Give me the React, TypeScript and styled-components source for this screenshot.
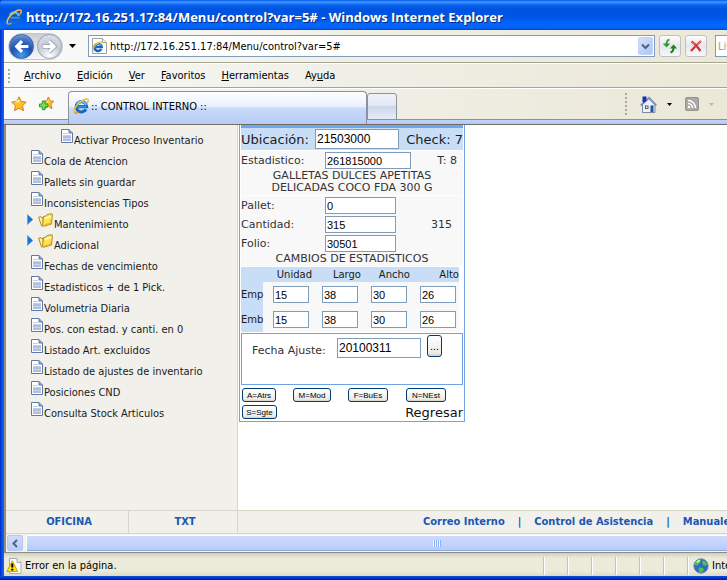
import React from 'react';
import styled, { createGlobalStyle } from 'styled-components';

const tahoma = '"DejaVu Sans Condensed", "DejaVu Sans", sans-serif';
const verdana = '"DejaVu Sans", sans-serif';
const arial = '"Liberation Sans", sans-serif';

const GlobalStyle = createGlobalStyle`
  * { box-sizing: border-box; }
  body { margin: 0; background: #fff; overflow: hidden; }
  button, input { font: inherit; margin: 0; }
  a { text-decoration: none; color: inherit; }
`;

const Window = styled.div`
  height: 100vh;
  display: flex;
  flex-direction: column;
  overflow: hidden;
  padding: 0 0 4px 4px;
  font-family: ${tahoma};
  font-size: 11px;
  color: #000;
  background: linear-gradient(transparent calc(100% - 4px), #0a4fe0 calc(100% - 4px), #0018a0 100%),
    linear-gradient(90deg, #0028c8 0, #0b50e4 2px, #0f66f4 4px, #eceadb 4px);
`;

const TitleBar = styled.header`
  flex: none;
  height: 30px;
  margin-left: -4px;
  padding: 3px 0 0 6px;
  display: flex;
  align-items: center;
  gap: 4px;
  border-top-left-radius: 4px;
  background: linear-gradient(#0058ee 0, #3f96ff 2px, #0a62f0 5px, #0053e0 9px, #0055e5 17px, #0266ff 24px, #0262f8 28px, #0144c8 30px);
`;

const Title = styled.h1`
  margin: 0;
  font: bold 13px/18px "Open Sans", sans-serif;
  color: #fff;
  white-space: nowrap;
  text-shadow: 1px 1px 0 #0a2a80;
`;

const NavBar = styled.div`
  flex: none;
  height: 33px;
  padding: 2px 0 2px 4px;
  display: flex;
  align-items: center;
  background: linear-gradient(90deg, #fafafa, #f0efe6 50%, #ebe8d7);
  border-bottom: 1px solid #a5a592;
`;

const NavPill = styled.div`
  display: flex;
  align-items: center;
  justify-content: space-between;
  height: 27px;
  width: 55px;
  border-radius: 14px;
  background: linear-gradient(#c9ccd1, #f7f8fa);
  border: 1px solid #c5c8cd;
`;

const RoundButton = styled.button<{ $active?: boolean }>`
  width: 25px;
  height: 25px;
  padding: 0;
  display: grid;
  place-items: center;
  border-radius: 50%;
  border: 1px solid ${(p) => (p.$active ? '#3c5e9e' : '#98a3b5')};
  background: ${(p) =>
    p.$active
      ? 'radial-gradient(circle at 50% 90%, #3fa0ee 0, #1f50b4 45%, #4b7dcb 75%, #a5c0ea 100%)'
      : 'radial-gradient(circle at 50% 90%, #ffffff 0, #c3cad6 50%, #e4e8ee 100%)'};
`;

const PlainButton = styled.button`
  padding: 0;
  border: 0;
  background: none;
  display: grid;
  place-items: center;
`;

const HistoryButton = styled(PlainButton)`
  width: 25px;
  height: 24px;
  padding-right: 7px;
`;

const AddressBox = styled.div`
  flex: 1;
  min-width: 0;
  height: 22px;
  padding: 1px 1px 1px 2px;
  display: flex;
  align-items: center;
  gap: 3px;
  background: #fff;
  border: 1px solid #7f9db9;
`;

const AddressInput = styled.input`
  flex: 1;
  min-width: 0;
  border: 0;
  padding: 1px 0 0;
  background: transparent;
  outline: 0;
`;

const DropButton = styled(PlainButton)`
  width: 15px;
  height: 18px;
  border-radius: 2px;
  background: linear-gradient(135deg, #d5e0fb, #afc5f4);
  border: 1px solid #c3d3f8;
`;

const SquareButton = styled(PlainButton)`
  flex: none;
  width: 22px;
  height: 22px;
  margin-left: 4px;
  border: 1px solid #bfc0c4;
  border-radius: 3px;
  background: linear-gradient(#fdfdfd, #e6e7ee 50%, #f8f8fa);
`;

const SearchInput = styled.input`
  flex: 0 0 160px;
  height: 22px;
  margin: 0 -148px 0 8px;
  padding: 0 2px;
  border: 1px solid #7f9db9;
  background: #fff;
  &::placeholder { color: #a2a090; opacity: 1; }
`;

const MenuBar = styled.nav`
  flex: none;
  height: 25px;
  padding: 1px 0 0 4px;
  display: flex;
  align-items: center;
  background: linear-gradient(90deg, #f9f9f8, #f0efe6 50%, #ebe8d7);
  border-top: 1px solid #fff;
  border-bottom: 1px solid #a5a592;
`;

const Grip = styled.span<{ $h: number }>`
  flex: none;
  width: 2px;
  height: ${(p) => p.$h}px;
  background: repeating-linear-gradient(#aaa9a0 0, #aaa9a0 2px, transparent 2px, transparent 4px);
`;

const MenuItems = styled.div`
  display: flex;
  gap: 16px;
  margin-left: 14px;
  button { padding: 0; border: 0; background: none; line-height: 18px; }
`;

const TabBar = styled.div`
  flex: none;
  height: 37px;
  display: flex;
  align-items: flex-start;
  background: linear-gradient(#fff 0, #fff 1px, transparent 1px),
    linear-gradient(transparent 31px, #8c919c 31px, #8c919c 32px, #c3d2f6 32px, #b4c8f6 36px, #716f64 36px),
    linear-gradient(90deg, #fafafa, #f0efe6 50%, #ebe8d7);
`;

const Favorites = styled.div`
  display: flex;
  width: 64px;
  padding: 8px 0 0 7px;
  gap: 11px;
`;

const Tab = styled.button`
  flex: 0 1 299px;
  height: 33px;
  margin-top: 3px;
  padding: 0 0 4px 4px;
  display: flex;
  align-items: center;
  gap: 2px;
  border: 1px solid #8c919c;
  border-bottom: 0;
  border-radius: 4px 4px 0 0;
  background: linear-gradient(#fdfeff 0, #eaf1fd 45%, #c9dbf9 50%, #b8cbf6 100%);
`;

const NewTab = styled.button`
  width: 30px;
  height: 27px;
  margin-top: 5px;
  padding: 0;
  border: 1px solid #8c919c;
  border-radius: 3px 3px 0 0;
  background: linear-gradient(#eef1fa 0, #e4e9f6 45%, #ccd5ea 50%, #e7ecf7);
`;

const Commands = styled.div`
  flex: none;
  margin-left: auto;
  height: 32px;
  display: flex;
  align-items: center;
  padding-right: 13px;
`;

const HomeGroup = styled.div`
  display: flex;
  align-items: center;
  gap: 10px;
  margin-left: 13px;
`;

const Viewport = styled.div`
  flex: 1;
  min-height: 0;
  display: flex;
  flex-direction: column;
  border-left: 2px solid #8f8d82;
  background: #fff;
`;

const Page = styled.div`
  flex: 1;
  min-height: 0;
  display: grid;
  grid-template-columns: 232px 1fr;
  overflow: hidden;
`;

const Sidebar = styled.ul`
  margin: 0;
  padding: 4px 0 0;
  list-style: none;
  background: #f1f0eb;
  border-right: 1px solid #d8d6c8;
`;

const TreeRow = styled.li<{ $indent: number }>`
  height: 21px;
  padding-left: ${(p) => p.$indent}px;
  display: flex;
  align-items: flex-start;
  white-space: nowrap;
  a { line-height: 23px; color: #1a1a1a; margin-left: 1px; }
  svg { flex: none; }
`;

const Arrow = styled.span`
  width: 11px;
  margin-top: 1px;
  display: flex;
`;

const Main = styled.main`
  padding-left: 1px;
  min-width: 0;
  background: #fff;
`;

const Panel = styled.form`
  width: 226px;
  padding: 0 1px 1px;
  border: 1px solid #6fa5e6;
  border-top: 0;
  background: #fff;
  font-family: ${verdana};
  color: #333;
`;

const PanelCap = styled.div`
  height: 3px;
  background: #6ea6ea;
`;

const LocationRow = styled.div`
  display: flex;
  align-items: center;
  height: 22px;
  margin-bottom: 1px;
  background: #c8ddf6;
  color: #1c1c1c;
  font-size: 13px;
`;

const Field = styled.input<{ $w: number; $large?: boolean }>`
  width: ${(p) => p.$w}px;
  height: ${(p) => (p.$large ? 20 : 17)}px;
  padding: 0 1px;
  border: 1px solid #7f9db9;
  border-radius: 0;
  background: #fff;
  color: #000;
  font: ${(p) => (p.$large ? '12px "Liberation Sans"' : '11px "Liberation Sans"')}, sans-serif;
`;

const Trailing = styled.span<{ $right: number }>`
  margin-left: auto;
  padding-right: ${(p) => p.$right}px;
`;

const LineRow = styled.div`
  display: flex;
  align-items: center;
  height: 19px;
  background: #f8f8f8;
  label { width: 84px; }
`;

const LocationLabel = styled.label`
  width: 74px;
  white-space: nowrap;
`;

const Caption = styled.div<{ $gap?: boolean }>`
  margin-bottom: ${(p) => (p.$gap ? 1 : 0)}px;
  padding-bottom: 1px;
  background: #f8f8f8;
  font-size: 11px;
  line-height: 12px;
  text-align: center;
`;

const Sizes = styled.table`
  width: 218px;
  border-collapse: collapse;
  table-layout: fixed;
  font-size: 10px;
  line-height: 12px;
  color: #1c1c1c;
  th { padding: 0; font-weight: normal; background: #c8ddf6; }
  thead th { height: 15px; text-align: right; }
  tbody th { text-align: left; }
  td { height: 25px; padding: 0 0 0 10px; background: #f8f8f8; vertical-align: middle; }
  input { display: block; }
`;

const DateBox = styled.div`
  height: 52px;
  margin-top: 1px;
  padding: 1px 0 0 10px;
  display: flex;
  align-items: flex-start;
  border: 1px solid #6fa5e6;
  label { width: 85px; line-height: 31px; }
  input { margin-top: 3px; }
`;

const DotsButton = styled.button`
  width: 15px;
  height: 22px;
  margin-left: 6px;
  padding: 0;
  border: 1px solid #003c74;
  border-radius: 3px;
  background: linear-gradient(#fff, #ecebe5 85%, #d6d0c5);
  font: 11px/16px ${arial};
`;

const Actions = styled.div`
  display: grid;
  grid-template-columns: 51px 55px 58px 1fr;
  row-gap: 3px;
  padding: 3px 0 0 1px;
`;

const ActionButton = styled.button<{ $w: number }>`
  width: ${(p) => p.$w}px;
  height: 14px;
  padding: 0;
  border: 1px solid #003c74;
  border-radius: 3px;
  background: linear-gradient(#fff, #ecebe5 85%, #d6d0c5);
  font: 8px/11px ${arial};
  color: #000;
`;

const BackLink = styled.a`
  grid-column: 2 / -1;
  justify-self: end;
  font-size: 13px;
  line-height: 15px;
  color: #111;
`;

const Footer = styled.div`
  flex: none;
  display: grid;
  grid-template-columns: 123px 109px 1fr;
  height: 24px;
  background: #f1f0eb;
  border-top: 1px solid #d8d6c8;
  border-bottom: 1px solid #d8d6c8;
  font-weight: bold;
  color: #1b57b3;
  white-space: nowrap;
`;

const FooterCell = styled.a`
  padding-left: 4px;
  border-right: 1px solid #d8d6c8;
  text-align: center;
  line-height: 22px;
`;

const FooterLinks = styled.nav`
  display: flex;
  gap: 13px;
  padding-left: 185px;
  line-height: 21px;
  min-width: 0;
`;

const ScrollBar = styled.div`
  flex: none;
  height: 18px;
  padding: 1px 0 1px 1px;
  display: flex;
  gap: 3px;
  overflow: hidden;
  background: #f3f2ec;
`;

const ScrollButton = styled(PlainButton)`
  flex: none;
  width: 16px;
  height: 16px;
  border: 1px solid #b5c7f3;
  border-radius: 2px;
  background: linear-gradient(#d0dcfc, #b8ccf8);
`;

const Thumb = styled.div`
  flex: 0 0 822px;
  height: 16px;
  display: grid;
  place-items: center;
  border: 1px solid #fff;
  border-bottom-color: #8aa9dd;
  border-radius: 2px;
  background: linear-gradient(#ccdafd, #c3d3fd 60%, #b5ccfa);
`;

const ThumbGrip = styled.span`
  width: 8px;
  height: 7px;
  background: repeating-linear-gradient(90deg, #eef4fe 0, #eef4fe 1px, #8cb0f8 1px, #8cb0f8 2px);
`;

const StatusBar = styled.footer`
  flex: none;
  height: 24px;
  display: flex;
  align-items: center;
  gap: 3px;
  padding: 2px 0 0 2px;
  border-top: 1px solid #8f8d82;
  background: linear-gradient(#d0cebf, #eceadb 5px, #eceadb 18px, #dcd9c6);
`;

const StatusCells = styled.div`
  flex: none;
  margin-left: auto;
  display: flex;
  height: 18px;
`;

const StatusCell = styled.span`
  width: 24px;
  border-left: 1px solid #c5c2b0;
  box-shadow: inset 1px 0 0 #fff;
`;

const Zone = styled(StatusCell)`
  width: 40px;
  padding-left: 5px;
  display: flex;
  align-items: center;
  gap: 3px;
  white-space: nowrap;
  svg { flex: none; }
`;

const IeLogo = ({ size }: { size: number }) => (
  <svg width={size} height={size} viewBox="0 0 16 16" aria-hidden="true">
    <path d="M13 11.2A5.200 5.200 0 1 1 13.600 8.600H5" fill="none" stroke="#1767c4" strokeWidth="3.200" />
    <path d="M13 7A4.900 4.900 0 0 0 4 6" fill="none" stroke="#5fbdf5" strokeWidth="2" />
    <path d="M5 8.800h8" stroke="#3f9fe6" strokeWidth="1.200" />
    <path d="M1.800 15C-.5 12.500 3.200 7 8 3.400 11.600.8 15.200.2 15.300 2.200c0 .9-.5 2-1.200 3" fill="none" stroke="#f7bd35" strokeWidth="1.500" />
    <path d="M1.600 14.800c1 .6 2.500.2 4-.8" fill="none" stroke="#d9961a" strokeWidth="1.500" />
  </svg>
);

const PageLogo = () => (
  <svg width="16" height="16" viewBox="0 0 16 16" aria-hidden="true">
    <path d="M1.500.5h10l4 4v11h-14z" fill="#fff" stroke="#a0a0a0" />
    <path d="M11.500.5v4h4" fill="#eee" stroke="#a0a0a0" />
    <path d="M10.300 11A3.600 3.600 0 1 1 10.700 9H4" fill="none" stroke="#1767c4" strokeWidth="2.500" />
    <path d="M10 7.500A3.300 3.300 0 0 0 4.500 7" fill="none" stroke="#5fbdf5" strokeWidth="1.200" />
    <path d="M2.400 13.500C1 11.500 3.500 7.500 6.500 5.300s5.500-1.800 5.300.2" fill="none" stroke="#f7bd35" strokeWidth="1.200" />
  </svg>
);

const NavArrow = ({ back }: { back?: boolean }) => (
  <svg width="17" height="17" viewBox="0 0 16 16" aria-hidden="true">
    {!back && <path d="M1.500 8h11M7.500 3l5 5-5 5" fill="none" stroke="#9aa3b2" strokeWidth="4.200" />}
    <path
      d={back ? 'M14.500 8H4M8.500 3l-5 5 5 5' : 'M2 8h10M7.500 3l5 5-5 5'}
      fill="none"
      stroke="#fff"
      strokeWidth={back ? 3 : 2.600}
    />
  </svg>
);

const Caret = ({ color = '#000', size = 7 }: { color?: string; size?: number }) => (
  <svg width={size} height={size === 7 ? 4 : 3} viewBox="0 0 7 4" aria-hidden="true">
    <path d="M0 0h7L3.500 4z" fill={color} />
  </svg>
);

const Star = ({ plus }: { plus?: boolean }) => (
  <svg width="16" height="16" viewBox="0 0 17 17" aria-hidden="true">
    <path
      d={plus ? 'M11 1l1.800 4.200 4 .4-3 3 1 5-3.800-2.600L7 13.500l1-4.400-3-3.500 4.200-.4z' : 'M8.500.8l2.400 5 5.400.7-4 3.700 1 5.500-4.800-2.700-4.800 2.700 1-5.500-4-3.700 5.400-.7z'}
      fill="#ffbe2a"
      stroke="#cf7d18"
    />
    <path d={plus ? 'M11 3.500l.6 3-3 .5z' : 'M8.500 3l1.200 3.800H6L3.500 7.500'} fill="#ffe88e" />
    {plus && <path d="M4.500 5.500h3v3h3v3h-3v3h-3v-3h-3v-3h3z" fill="#7be05a" stroke="#1f9429" />}
  </svg>
);

const Refresh = () => (
  <svg width="16" height="16" viewBox="0 0 16 16" aria-hidden="true">
    <path d="M7.500 1.500C5 2 4.500 3.500 4.500 7" fill="none" stroke="#3fa63a" strokeWidth="2" />
    <path d="M.8 5.500h7.400L4.500 9.500z" fill="#2e9a2e" />
    <path d="M8.500 14.500c2.500-.5 3-2 3-5.500" fill="none" stroke="#1f7a1c" strokeWidth="2" />
    <path d="M7.800 10.500h7.400L11.500 6.500z" fill="#23811f" />
  </svg>
);

const Cross = () => (
  <svg width="14" height="14" viewBox="0 0 14 14" aria-hidden="true">
    <path d="M2.500 2.500C5 4 9 8.500 11.500 12M12 2C9 4.500 5 8.500 2 12" fill="none" stroke="#c93636" strokeWidth="2.200" />
    <path d="M2.500 2.500L6 5.500M12 2L8 5.500" stroke="#ee8a80" strokeWidth="1" />
  </svg>
);

const Home = () => (
  <svg width="17" height="17" viewBox="0 0 17 17" aria-hidden="true">
    <path d="M2.500 8v8.500h12.500V8L9 2.500z" fill="#edf0f6" stroke="#7d89a3" />
    <path d="M.8 9.500L9 1.800l7.200 7.700" fill="none" stroke="#7c92c0" strokeWidth="2" />
    <path d="M2.500.5h4v4l-2.500 2.300-1.500-.8z" fill="#1a2fc0" />
    <path d="M10.500 9.500h3V16h-3z" fill="#1557a8" />
    <path d="M5 9.500h3.500V13H5z" fill="#55585e" />
    <path d="M6 10.500h1.500V12H6z" fill="#fff" />
  </svg>
);

const Rss = () => (
  <svg width="14" height="14" viewBox="0 0 14 14" aria-hidden="true">
    <rect x=".5" y=".5" width="13" height="13" rx="1.500" fill="#aaa9a3" stroke="#93928c" />
    <circle cx="4" cy="10" r="1.300" fill="#fff" />
    <path d="M3 6.500A4.500 4.500 0 0 1 7.500 11M3 3.500A7.500 7.500 0 0 1 10.500 11" fill="none" stroke="#fff" strokeWidth="1.400" />
  </svg>
);

const DocIcon = () => (
  <svg width="12" height="14" viewBox="0 0 12 14" aria-hidden="true">
    <path d="M.5.5h7.500l3.500 3.500v9.500H.5z" fill="#fff" stroke="#6179a8" />
    <path d="M8 .5V4h3.500" fill="#8fa3c9" stroke="#6179a8" />
    <path d="M2 4.500h5M2 6.500h8" stroke="#c3cde6" />
    <path d="M2 7h8v5H2z" fill="#b0bfe0" />
    <path d="M2 9.500h8" stroke="#c9d3ea" />
  </svg>
);

const FolderIcon = () => (
  <svg width="15" height="14" viewBox="0 0 15 14" aria-hidden="true">
    <path d="M.6 4.200l2.200-.6.700 1 1.500-.3.500 8.200-2 .4z" fill="#fff3a0" stroke="#b08a20" />
    <path d="M4.500 12.800L5.500 3.500l2.500-.4L9 1.600l4.800-1 .6 1L13.500 11l-8 2.300z" fill="#ffe45a" stroke="#b08a20" />
    <path d="M6.500 5l6.800-1.300" stroke="#fffbd0" strokeWidth="1.300" />
    <path d="M6 12l6.500-1.800L13 7" fill="none" stroke="#eebb28" strokeWidth="1.300" />
  </svg>
);

const ArrowIcon = () => (
  <svg width="6" height="11" viewBox="0 0 6 11" aria-hidden="true">
    <path d="M0 0l6 5.500L0 11z" fill="#1a73d6" />
    <path d="M.5 1v9" stroke="#63a4ea" />
  </svg>
);

const Chevron = ({ left }: { left?: boolean }) => (
  <svg width="9" height="9" viewBox="0 0 9 9" aria-hidden="true">
    <path d={left ? 'M6 1L2.500 4.500 6 8' : 'M1 2.500L4.500 6 8 2.500'} fill="none" stroke="#4d6185" strokeWidth="2" />
  </svg>
);

const Warning = () => (
  <svg width="16" height="16" viewBox="0 0 16 16" aria-hidden="true">
    <path d="M3.500.5h7.500l4 4v11H3.500z" fill="#fff" stroke="#a9a9a9" />
    <path d="M11 .5v4h4" fill="#eee" stroke="#a9a9a9" />
    <path d="M6.300 2.800L.8 13.500h11z" fill="#ffdc1e" stroke="#cfa500" />
    <path d="M6.300 5.500v4M6.300 10.800v1.700" stroke="#000" strokeWidth="2" />
  </svg>
);

const Globe = () => (
  <svg width="16" height="16" viewBox="0 0 16 16" aria-hidden="true">
    <circle cx="8" cy="8" r="7.200" fill="#2f6cbf" stroke="#6d8fb5" />
    <path d="M2 4c2-2.500 5-3 6-2.500L7 5 4.500 7.500 2 7zM9 3c3-1 5 2 5 4l-3 1-1.500-2zM6 9.500l4 .5 1 2-3 3c-2-1-3-3-2-5.500z" fill="#4fc04a" />
    <path d="M4 4.500c1-1.500 2-2 3-2" fill="none" stroke="#d9f5c9" strokeWidth="1.500" />
  </svg>
);

type TreeItem = { label: string; indent: number; folder?: boolean };

const tree: TreeItem[] = [
  { label: 'Activar Proceso Inventario', indent: 55 },
  { label: 'Cola de Atencion', indent: 25 },
  { label: 'Pallets sin guardar', indent: 25 },
  { label: 'Inconsistencias Tipos', indent: 25 },
  { label: 'Mantenimiento', indent: 21, folder: true },
  { label: 'Adicional', indent: 21, folder: true },
  { label: 'Fechas de vencimiento', indent: 25 },
  { label: 'Estadisticos + de 1 Pick.', indent: 25 },
  { label: 'Volumetria Diaria', indent: 25 },
  { label: 'Pos. con estad. y canti. en 0', indent: 25 },
  { label: 'Listado Art. excluidos', indent: 25 },
  { label: 'Listado de ajustes de inventario', indent: 25 },
  { label: 'Posiciones CND', indent: 25 },
  { label: 'Consulta Stock Articulos', indent: 25 },
];

const columns = ['Unidad', 'Largo', 'Ancho', 'Alto'];
const sizeRows = [
  { name: 'Emp', values: ['15', '38', '30', '26'] },
  { name: 'Emb', values: ['15', '38', '30', '26'] },
];

const lines = [
  { id: 'pallet', label: 'Pallet:', value: '0', extra: '' },
  { id: 'cantidad', label: 'Cantidad:', value: '315', extra: '315' },
  { id: 'folio', label: 'Folio:', value: '30501', extra: '' },
];

const AdjustmentPanel = () => (
  <Panel onSubmit={(e) => e.preventDefault()}>
    <PanelCap />
    <LocationRow>
      <LocationLabel htmlFor="ubicacion">Ubicación:</LocationLabel>
      <Field id="ubicacion" $w={84} $large defaultValue="21503000" />
      <Trailing $right={0}>Check: 7</Trailing>
    </LocationRow>
    <LineRow>
      <label htmlFor="estadistico">Estadistico:</label>
      <Field id="estadistico" $w={86} defaultValue="261815000" />
      <Trailing $right={6}>T: 8</Trailing>
    </LineRow>
    <Caption $gap>
      GALLETAS DULCES APETITAS
      <br />
      DELICADAS COCO FDA 300 G
    </Caption>
    {lines.map((l) => (
      <LineRow key={l.id}>
        <label htmlFor={l.id}>{l.label}</label>
        <Field id={l.id} $w={71} defaultValue={l.value} />
        {l.extra && <Trailing $right={11}>{l.extra}</Trailing>}
      </LineRow>
    ))}
    <Caption $gap>CAMBIOS DE ESTADISTICOS</Caption>
    <Sizes>
      <colgroup>
        <col width="22" />
        <col span={4} width="49" />
      </colgroup>
      <thead>
        <tr>
          <th aria-label="Tipo" />
          {columns.map((c) => (
            <th key={c} scope="col">{c}</th>
          ))}
        </tr>
      </thead>
      <tbody>
        {sizeRows.map((r) => (
          <tr key={r.name}>
            <th scope="row">{r.name}</th>
            {r.values.map((v, i) => (
              <td key={columns[i]}>
                <Field $w={36} aria-label={`${r.name} ${columns[i]}`} defaultValue={v} />
              </td>
            ))}
          </tr>
        ))}
      </tbody>
    </Sizes>
    <DateBox>
      <label htmlFor="fecha">Fecha Ajuste:</label>
      <Field id="fecha" $w={84} $large defaultValue="20100311" />
      <DotsButton type="button">...</DotsButton>
    </DateBox>
    <Actions>
      <ActionButton type="button" $w={34}>A=Atrs</ActionButton>
      <ActionButton type="button" $w={38}>M=Mod</ActionButton>
      <ActionButton type="button" $w={40}>F=BuEs</ActionButton>
      <ActionButton type="button" $w={40}>N=NEst</ActionButton>
      <ActionButton type="button" $w={35}>S=Sgte</ActionButton>
      <BackLink href="#">Regresar</BackLink>
    </Actions>
  </Panel>
);

export default function App() {
  return (
    <>
      <GlobalStyle />
      <Window>
        <TitleBar>
          <IeLogo size={16} />
          <Title>http://172.16.251.17:84/Menu/control?var=5# - Windows Internet Explorer</Title>
        </TitleBar>
        <NavBar>
          <NavPill>
            <RoundButton $active aria-label="Atrás"><NavArrow back /></RoundButton>
            <RoundButton aria-label="Adelante"><NavArrow /></RoundButton>
          </NavPill>
          <HistoryButton aria-label="Historial"><Caret /></HistoryButton>
          <AddressBox>
            <PageLogo />
            <AddressInput aria-label="Dirección" defaultValue="http://172.16.251.17:84/Menu/control?var=5#" />
            <DropButton aria-label="Direcciones"><Chevron /></DropButton>
          </AddressBox>
          <SquareButton aria-label="Actualizar"><Refresh /></SquareButton>
          <SquareButton aria-label="Detener"><Cross /></SquareButton>
          <SearchInput aria-label="Buscar" placeholder="Live Search" />
        </NavBar>
        <MenuBar>
          <Grip $h={14} />
          <MenuItems>
            <button><u>A</u>rchivo</button>
            <button><u>E</u>dición</button>
            <button><u>V</u>er</button>
            <button><u>F</u>avoritos</button>
            <button><u>H</u>erramientas</button>
            <button>Ay<u>u</u>da</button>
          </MenuItems>
        </MenuBar>
        <TabBar>
          <Favorites>
            <PlainButton aria-label="Favoritos"><Star /></PlainButton>
            <PlainButton aria-label="Agregar a Favoritos"><Star plus /></PlainButton>
          </Favorites>
          <Tab>
            <IeLogo size={16} />
            :: CONTROL INTERNO ::
          </Tab>
          <NewTab aria-label="Nueva ficha" />
          <Commands>
            <Grip $h={22} />
            <HomeGroup>
              <PlainButton aria-label="Página principal"><Home /></PlainButton>
              <Caret size={5} />
            </HomeGroup>
            <HomeGroup>
              <PlainButton aria-label="Fuentes"><Rss /></PlainButton>
              <Caret size={5} color="#b9b7a8" />
            </HomeGroup>
          </Commands>
        </TabBar>
        <Viewport>
          <Page>
            <Sidebar>
              {tree.map((t) => (
                <TreeRow key={t.label} $indent={t.indent}>
                  {t.folder && <Arrow><ArrowIcon /></Arrow>}
                  {t.folder ? <FolderIcon /> : <DocIcon />}
                  <a href="#">{t.label}</a>
                </TreeRow>
              ))}
            </Sidebar>
            <Main>
              <AdjustmentPanel />
            </Main>
          </Page>
          <Footer>
            <FooterCell href="#">OFICINA</FooterCell>
            <FooterCell href="#">TXT</FooterCell>
            <FooterLinks>
              <a href="#">Correo Interno</a>
              <span>|</span>
              <a href="#">Control de Asistencia</a>
              <span>|</span>
              <a href="#">Manuales</a>
            </FooterLinks>
          </Footer>
          <ScrollBar>
            <ScrollButton aria-label="Desplazar a la izquierda"><Chevron left /></ScrollButton>
            <Thumb><ThumbGrip /></Thumb>
          </ScrollBar>
        </Viewport>
        <StatusBar>
          <Warning />
          Error en la página.
          <StatusCells>
            {[0, 1, 2, 3, 4, 5].map((n) => (
              <StatusCell key={n} />
            ))}
            <Zone>
              <Globe />
              Internet
            </Zone>
          </StatusCells>
        </StatusBar>
      </Window>
    </>
  );
}
